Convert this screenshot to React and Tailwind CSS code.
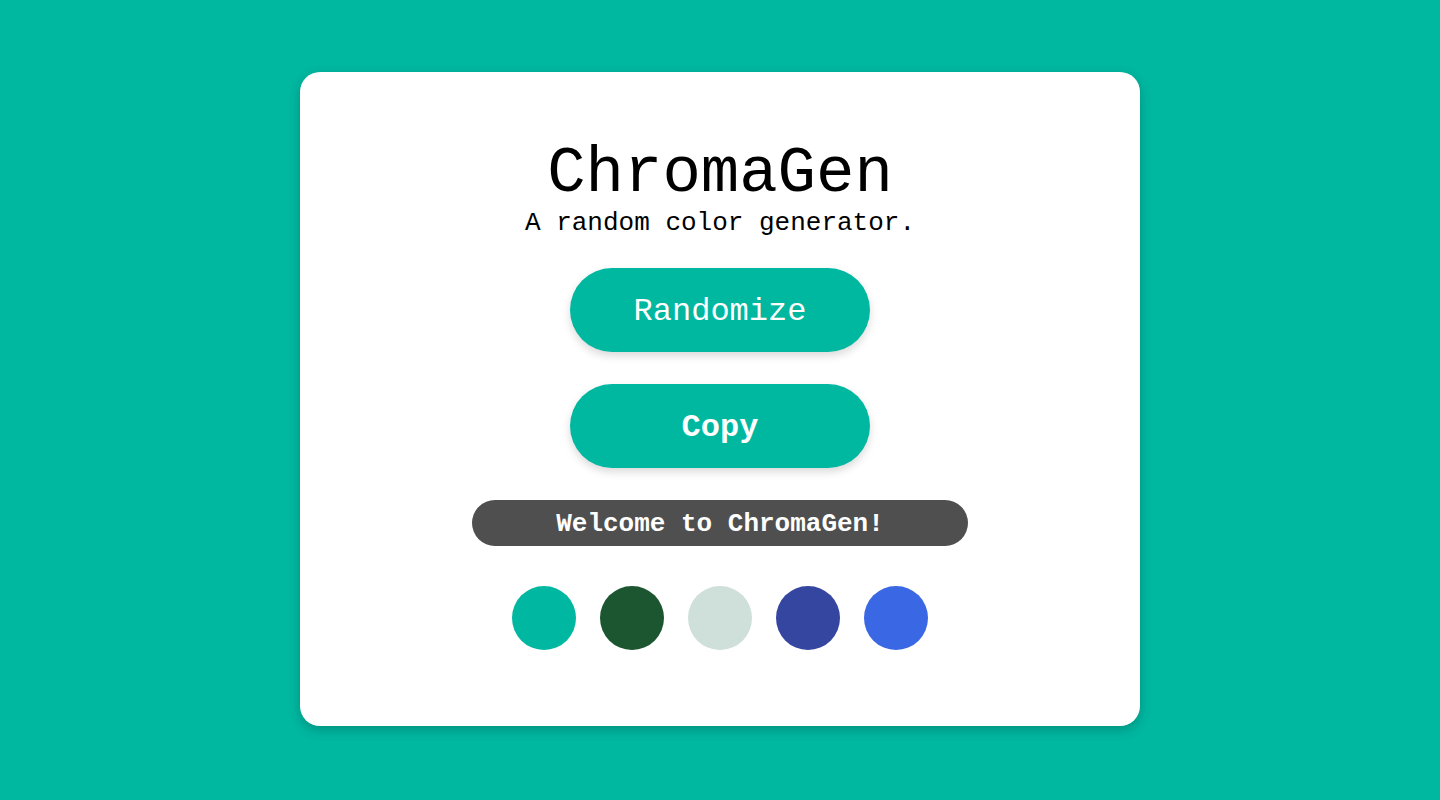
const swatches = ["#00b8a1", "#1c5631", "#cfdfd9", "#3546a0", "#3a67e4"];

export default function App() {
  return (
    <div className="min-h-screen w-full bg-[#00b7a0] flex items-start justify-center pt-[72px] font-['Liberation_Mono',monospace]">
      <div className="w-[840px] h-[654px] bg-white rounded-[20px] shadow-[0_4px_12px_rgba(0,0,0,0.2)] flex flex-col items-center pt-[68px]">
        <h1 className="text-[64px] leading-[68px] text-black">ChromaGen</h1>
        <p className="text-[26px] leading-[30px] text-black">A random color generator.</p>

        <button className="mt-[30px] w-[300px] h-[84px] pt-[4px] rounded-full bg-[#00b7a0] text-white text-[32px] shadow-[0_4px_8px_rgba(0,0,0,0.15)]">
          Randomize
        </button>
        <button className="mt-[32px] w-[300px] h-[84px] pt-[4px] rounded-full bg-[#00b7a0] text-white text-[32px] font-bold shadow-[0_4px_8px_rgba(0,0,0,0.15)]">
          Copy
        </button>

        <div className="mt-[32px] w-[496px] h-[46px] pt-[3px] rounded-full bg-[#4f4f4f] text-white text-[26px] font-bold flex items-center justify-center">
          Welcome to ChromaGen!
        </div>

        <div className="mt-[40px] flex gap-[24px]">
          {swatches.map((c) => (
            <div key={c} className="w-[64px] h-[64px] rounded-full" style={{ backgroundColor: c }} />
          ))}
        </div>
      </div>
    </div>
  );
}
